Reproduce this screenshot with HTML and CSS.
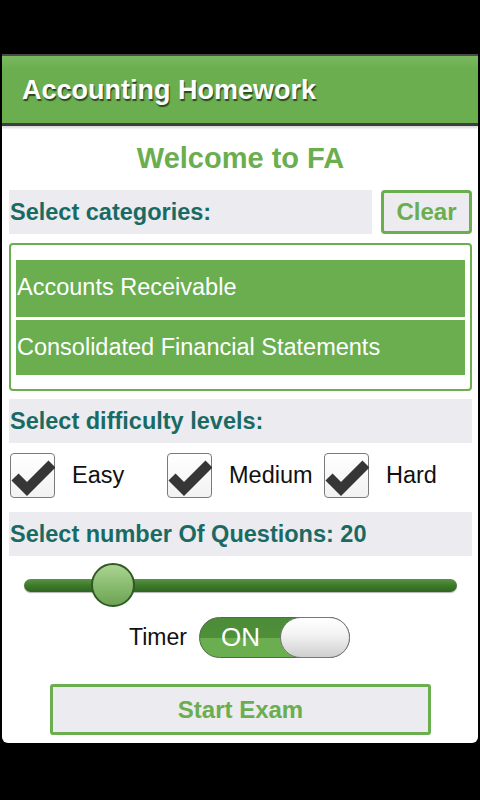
FILE: index.html
```html
<!DOCTYPE html>
<html>
<head>
<meta charset="utf-8">
<link rel="stylesheet" href="styles.css">
</head>
<body>
<div class="topbar"></div>
<div class="panel">
  <div class="header"><h1 class="header-title">Accounting Homework</h1></div>
  <div class="content">
    <h2 class="welcome">Welcome to FA</h2>
    <div class="cat-row">
      <div class="label-row cat-label">Select categories:</div>
      <button class="clear-btn">Clear</button>
    </div>
    <div class="list-box">
      <div class="list-item">Accounts Receivable</div>
      <div class="list-item">Consolidated Financial Statements</div>
    </div>
    <div class="label-row">Select difficulty levels:</div>
    <div class="checks">
      <div class="check-item">
        <span class="check-box"><svg viewBox="0 0 45 45" width="45" height="45"><path d="M5 24 L17 36 L42 11" fill="none" stroke="#363636" stroke-width="10" stroke-linejoin="miter" stroke-linecap="butt"/></svg></span>
        <span class="check-label">Easy</span>
      </div>
      <div class="check-item">
        <span class="check-box"><svg viewBox="0 0 45 45" width="45" height="45"><path d="M5 24 L17 36 L42 11" fill="none" stroke="#363636" stroke-width="10" stroke-linejoin="miter" stroke-linecap="butt"/></svg></span>
        <span class="check-label">Medium</span>
      </div>
      <div class="check-item">
        <span class="check-box"><svg viewBox="0 0 45 45" width="45" height="45"><path d="M5 24 L17 36 L42 11" fill="none" stroke="#363636" stroke-width="10" stroke-linejoin="miter" stroke-linecap="butt"/></svg></span>
        <span class="check-label">Hard</span>
      </div>
    </div>
    <div class="label-row q-row">Select number Of Questions: 20</div>
    <div class="slider">
      <div class="track"><div class="thumb"></div></div>
    </div>
    <div class="timer-row">
      <span class="timer-label">Timer</span>
      <div class="toggle">
        <span class="toggle-on">ON</span>
        <span class="knob"></span>
      </div>
    </div>
    <div class="start-wrap"><button class="start-btn">Start Exam</button></div>
  </div>
</div>
</body>
</html>
```
FILE: styles.css
```css
html, body {
  margin: 0;
  padding: 0;
  background: #000;
  font-family: "Liberation Sans", Arial, sans-serif;
}
.topbar { height: 54px; }
.panel {
  margin: 0 2px;
  background: #fff;
  border-radius: 0 0 6px 6px;
  height: 689px;
  overflow: hidden;
}
.header {
  height: 65px;
  background: linear-gradient(#79b85e, #6aae4f 20%, #6aae4f);
  border-top: 2px solid #4b4b4b;
  border-bottom: 3px solid #3e3e3e;
  display: flex;
  align-items: center;
  padding-left: 20px;
  padding-top: 2px;
  box-sizing: content-box;
  box-shadow: 0 2px 2px rgba(0,0,0,0.15);
}
.header-title {
  margin: 0;
  color: #fff;
  font-size: 27px;
  font-weight: bold;
  text-shadow: 1px 2px 1px rgba(0,0,0,0.6);
}
.content {
  padding: 0 6px 0 7px;
}
.welcome {
  margin: 0;
  padding-top: 12px;
  height: 52px;
  line-height: 40px;
  text-align: center;
  color: #6aae4f;
  font-size: 29px;
  font-weight: bold;
}
.label-row {
  background: #ebebf0;
  color: #1a6a64;
  font-size: 23.5px;
  font-weight: bold;
  height: 44px;
  line-height: 44px;
  padding-left: 1px;
}
.cat-row {
  display: flex;
  gap: 9px;
}
.cat-label { flex: 1; }
.clear-btn {
  width: 91px;
  height: 44px;
  box-sizing: border-box;
  border: 3px solid #6aae4f;
  border-radius: 4px;
  background: #ebebf0;
  color: #6aae4f;
  font-family: "Liberation Sans", Arial, sans-serif;
  font-size: 24px;
  font-weight: bold;
  padding: 0;
}
.list-box {
  margin-top: 9px;
  margin-bottom: 8px;
  border: 2px solid #6aae4f;
  border-radius: 4px;
  height: 148px;
  padding: 15px 5px 0 5px;
  box-sizing: border-box;
}
.list-item {
  background: #6aae4f;
  color: #fff;
  font-size: 23.5px;
  height: 57px;
  line-height: 55px;
  padding-left: 1px;
}
.list-item + .list-item {
  margin-top: 3px;
  height: 55px;
  line-height: 55px;
}
.checks {
  display: grid;
  grid-template-columns: 157px 157px auto;
  padding-left: 1px;
  margin-top: 10px;
  height: 45px;
  margin-bottom: 14px;
}
.check-item {
  display: flex;
  align-items: center;
  gap: 17px;
}
.check-box {
  width: 45px;
  height: 45px;
  box-sizing: border-box;
  border: 1.5px solid #7a7a7a;
  border-radius: 4px;
  background: linear-gradient(#ffffff, #f2f2f2);
  display: flex;
  align-items: center;
  justify-content: center;
  overflow: visible;
}
.check-box svg { display: block; flex: none; }
.check-label {
  font-size: 23.5px;
  color: #111;
}
.slider {
  margin-top: 7px;
  height: 44px;
  display: flex;
  align-items: center;
  padding: 0 15px;
}
.track {
  position: relative;
  flex: 1;
  height: 13px;
  border-radius: 7px;
  background: linear-gradient(#5a9443, #3c7a2a 50%, #2f6622);
  box-shadow: 0 1px 1px rgba(0,0,0,0.3);
}
.thumb {
  position: absolute;
  left: 67px;
  top: -16px;
  width: 44px;
  height: 44px;
  box-sizing: border-box;
  border-radius: 50%;
  border: 2px solid #2f5a24;
  background: linear-gradient(#acd494, #86ba6c 55%, #6ea356);
}
.timer-row {
  margin-top: 10px;
  display: flex;
  justify-content: center;
  align-items: center;
  gap: 12px;
  padding-right: 2px;
}
.timer-label {
  font-size: 23px;
  color: #111;
}
.toggle {
  position: relative;
  width: 151px;
  height: 41px;
  box-sizing: border-box;
  border-radius: 21px;
  border: 1px solid #4d6e42;
  background: linear-gradient(#4c8b37, #4f8f3a 50%, #6aae4f 52%, #6aae4f);
  display: flex;
  align-items: center;
}
.toggle-on {
  color: #fff;
  font-size: 26px;
  margin-left: 21px;
}
.knob {
  position: absolute;
  right: -1px;
  top: -1px;
  width: 70px;
  height: 41px;
  box-sizing: border-box;
  border-radius: 21px;
  border: 1.5px solid #777;
  background: linear-gradient(#ffffff, #f4f4f4 40%, #cfcfcf);
}
.start-wrap {
  margin-top: 26px;
  padding-left: 41px;
}
.start-btn {
  width: 381px;
  height: 51px;
  box-sizing: border-box;
  border: 3px solid #6aae4f;
  border-radius: 3px;
  background: #ebebf0;
  color: #6aae4f;
  font-family: "Liberation Sans", Arial, sans-serif;
  font-size: 24px;
  font-weight: bold;
  padding: 0;
}
```
